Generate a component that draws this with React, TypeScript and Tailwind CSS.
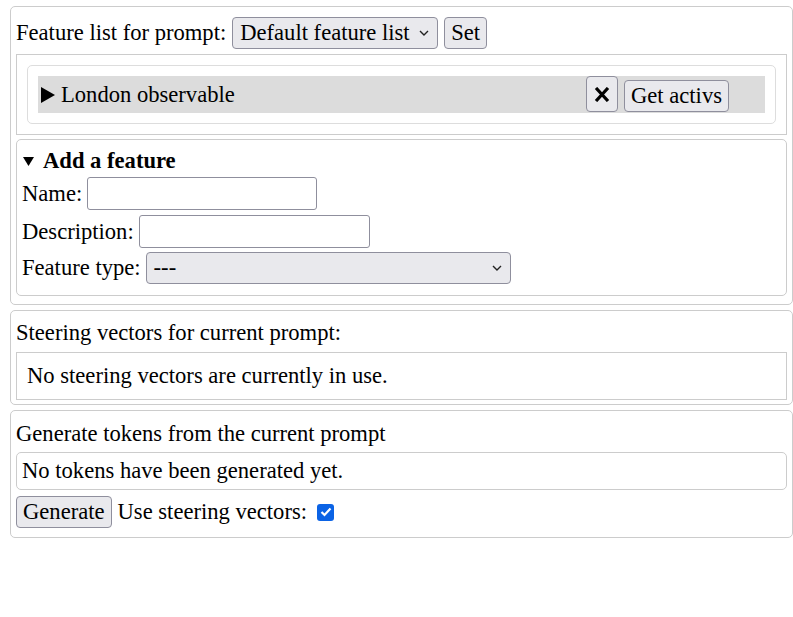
import React from 'react';

function Chevron() {
  return (
    <svg width="10" height="6" viewBox="0 0 10 6" className="pointer-events-none absolute top-1/2 -translate-y-1/2 right-[9px]">
      <path d="M1 1 L5 5 L9 1" fill="none" stroke="#222" strokeWidth="1.4" />
    </svg>
  );
}

function Select({ label, width }: { label: string; width: string }) {
  return (
    <div className={`relative h-[32px] ${width}`}>
      <div className="h-full rounded-[4px] border border-[#8f8f9d] bg-[#e9e9ed] pl-[7px] leading-[30px]">{label}</div>
      <Chevron />
    </div>
  );
}

function Btn({ children, className = '' }: { children: React.ReactNode; className?: string }) {
  return (
    <button
      type="button"
      className={`h-[32px] rounded-[4px] border border-[#8f8f9d] bg-[#e9e9ed] px-[6px] leading-[30px] ${className}`}
    >
      {children}
    </button>
  );
}

export default function App() {
  return (
    <div className="min-h-[617px] bg-white pl-[10px] pt-[6px] text-[22.6px] leading-[26px] text-black font-['Liberation_Serif',serif]">
      {/* feature list card */}
      <div className="rounded-[5px] border border-[#cccccc] px-[5px] pt-[10px] pb-[8px]">
        <div className="flex items-center gap-[6px]">
          <span>Feature list for prompt:</span>
          <Select label="Default feature list" width="w-[206px]" />
          <Btn>Set</Btn>
        </div>
        <div className="mt-[5px] border border-[#cccccc] p-[10px]">
          <div className="rounded-[5px] border border-[#dddddd] p-[10px]">
            <div className="flex h-[37px] items-end bg-[#dcdcdc] pl-[3px] pr-[36px]">
              <div className="flex h-full flex-1 items-center gap-[6px]">
                <svg width="14" height="16" viewBox="0 0 14 16">
                  <polygon points="0,0 14,8 0,16" fill="#000" />
                </svg>
                <span>London observable</span>
              </div>
              <button
                type="button"
                className="mb-[1px] flex h-[36px] w-[32px] items-center justify-center rounded-[4px] border border-[#8f8f9d] bg-[#e9e9ed]"
              >
                <svg width="16" height="15" viewBox="0 0 16 15">
                  <path d="M2 1 L14 14 M14 1 L2 14" stroke="#000" strokeWidth="3.2" />
                </svg>
              </button>
              <Btn className="mb-[1px] ml-[6px]">Get activs</Btn>
            </div>
          </div>
        </div>
        {/* add a feature */}
        <div className="mt-[4px] rounded-[5px] border border-[#cccccc] px-[5px] pt-[8px] pb-[11px]">
          <div className="flex items-center gap-[9px] font-bold">
            <svg width="11" height="9" viewBox="0 0 11 9" className="ml-[1px]">
              <polygon points="0,0 11,0 5.5,9" fill="#000" />
            </svg>
            <span>Add a feature</span>
          </div>
          <div className="mt-[3px] flex items-center gap-[5px]">
            <span>Name:</span>
            <div className="h-[33px] w-[230px] rounded-[3px] border border-[#8f8f9d] bg-white" />
          </div>
          <div className="mt-[5px] flex items-center gap-[5px]">
            <span>Description:</span>
            <div className="h-[33px] w-[231px] rounded-[3px] border border-[#8f8f9d] bg-white" />
          </div>
          <div className="mt-[4px] flex items-center gap-[5px]">
            <span>Feature type:</span>
            <Select label="---" width="w-[365px]" />
          </div>
        </div>
      </div>

      {/* steering vectors */}
      <div className="mt-[5px] rounded-[5px] border border-[#cccccc] px-[5px] pt-[9px] pb-[4px]">
        <div>Steering vectors for current prompt:</div>
        <div className="mt-[6px] border border-[#cccccc] px-[10px] py-[10px]">No steering vectors are currently in use.</div>
      </div>

      {/* generate */}
      <div className="mt-[5px] rounded-[5px] border border-[#cccccc] px-[5px] pt-[10px] pb-[9px]">
        <div>Generate tokens from the current prompt</div>
        <div className="mt-[5px] rounded-[5px] border border-[#cccccc] px-[5px] py-[5px]">No tokens have been generated yet.</div>
        <div className="mt-[6px] flex items-center">
          <Btn className="px-[6px]">Generate</Btn>
          <span className="ml-[6px]">Use steering vectors:</span>
          <span className="ml-[10px] flex h-[17px] w-[17px] items-center justify-center rounded-[3px] bg-[#0b63e5]">
            <svg width="12" height="10" viewBox="0 0 12 10">
              <path d="M1.5 5 L4.5 8 L10.5 1.5" fill="none" stroke="#fff" strokeWidth="2.2" />
            </svg>
          </span>
        </div>
      </div>
    </div>
  );
}
